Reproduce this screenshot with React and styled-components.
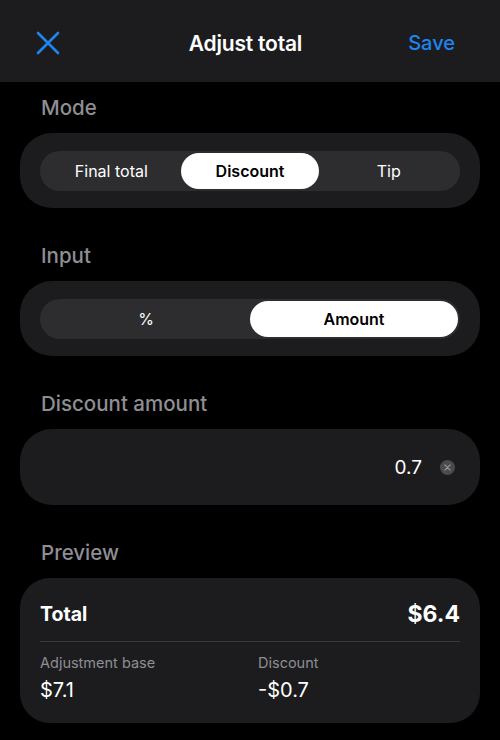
import React, { useState } from "react";
import styled, { createGlobalStyle } from "styled-components";

const GlobalStyle = createGlobalStyle`
  html, body {
    margin: 0;
    padding: 0;
    background: #000;
  }
  body {
    font-family: "Inter", "Liberation Sans", sans-serif;
    color: #fff;
    -webkit-font-smoothing: antialiased;
  }
`;

const Page = styled.div`
  width: 500px;
  min-height: 740px;
  background: #000;
`;

const Header = styled.div`
  height: 82px;
  background: #1c1c1e;
  display: grid;
  grid-template-columns: 1fr auto 1fr;
  align-items: center;
  padding: 4px 45px 0 36px;
  box-sizing: border-box;
`;

const IconButton = styled.button`
  background: none;
  border: 0;
  padding: 0;
  width: 24px;
  height: 24px;
  display: flex;
  align-items: center;
  justify-content: center;
  cursor: pointer;
  justify-self: start;
`;

const Title = styled.div`
  font-size: 21px;
  font-weight: 600;
  letter-spacing: -0.2px;
`;

const SaveButton = styled.button`
  justify-self: end;
  background: none;
  border: 0;
  padding: 0;
  color: #1e84ee;
  font-family: inherit;
  font-size: 20px;
  font-weight: 500;
  cursor: pointer;
`;

const Content = styled.div`
  padding: 14px 20px 18px;
`;

const Label = styled.div`
  font-size: 20.5px;
  font-weight: 500;
  line-height: 24px;
  color: #8e8e93;
  padding-left: 21px;
  margin-top: ${(p) => (p.first ? 0 : 36)}px;
  margin-bottom: 13px;
`;

const Card = styled.div`
  background: #1c1c1e;
  border-radius: 32px;
  height: ${(p) => p.h || 75}px;
  padding: 0 20px;
  box-sizing: border-box;
  display: flex;
  align-items: center;
`;

const Segmented = styled.div`
  flex: 1;
  display: flex;
  background: #2d2d30;
  border-radius: 20px;
  padding: 2px;
  height: 40px;
  box-sizing: border-box;
`;

const Segment = styled.button`
  flex: 1;
  border: 0;
  border-radius: 18px;
  background: ${(p) => (p.active ? "#fff" : "transparent")};
  color: ${(p) => (p.active ? "#000" : "#fff")};
  font-family: inherit;
  font-size: 16px;
  font-weight: ${(p) => (p.active ? 600 : 400)};
  cursor: pointer;
`;

const AmountInput = styled.input`
  flex: 1;
  background: none;
  border: 0;
  outline: none;
  color: #fff;
  text-align: right;
  font-family: inherit;
  font-size: 19px;
  padding: 0;
  margin-right: 18px;
`;

const ClearButton = styled.button`
  width: 15px;
  height: 15px;
  border-radius: 50%;
  border: 0;
  padding: 0;
  background: #4b4b4e;
  display: flex;
  align-items: center;
  justify-content: center;
  margin-right: 5px;
  cursor: pointer;
`;

const PreviewCard = styled.div`
  background: #1c1c1e;
  border-radius: 30px;
  padding: 20px 20px 21px;
`;

const TotalRow = styled.div`
  display: flex;
  justify-content: space-between;
  align-items: center;
  height: 32px;
`;

const TotalLabel = styled.div`
  font-size: 19.5px;
  font-weight: 700;
`;

const TotalValue = styled.div`
  font-size: 23px;
  font-weight: 700;
`;

const Divider = styled.div`
  height: 1px;
  background: #38383a;
  margin-top: 11px;
`;

const Details = styled.div`
  display: grid;
  grid-template-columns: 1fr 1fr;
  column-gap: 16px;
  margin-top: 12px;
`;

const DetailLabel = styled.div`
  font-size: 14.5px;
  line-height: 18px;
  color: #8e8e93;
`;

const DetailValue = styled.div`
  font-size: 20px;
  line-height: 24px;
  margin-top: 6px;
`;

const modes = ["Final total", "Discount", "Tip"];
const inputs = ["%", "Amount"];

export default function App() {
  const [mode, setMode] = useState("Discount");
  const [inputType, setInputType] = useState("Amount");
  const [amount, setAmount] = useState("0.7");

  const base = 7.1;
  const value = parseFloat(amount) || 0;
  const total = Math.round((base - value) * 100) / 100;

  return (
    <Page>
      <GlobalStyle />
      <Header>
        <IconButton aria-label="Close">
          <svg width="24" height="24" viewBox="0 0 24 24">
            <path
              d="M2 2 L22 22 M22 2 L2 22"
              stroke="#1e84ee"
              strokeWidth="2.6"
              strokeLinecap="round"
            />
          </svg>
        </IconButton>
        <Title>Adjust total</Title>
        <SaveButton>Save</SaveButton>
      </Header>
      <Content>
        <Label first>Mode</Label>
        <Card>
          <Segmented>
            {modes.map((m) => (
              <Segment key={m} active={m === mode} onClick={() => setMode(m)}>
                {m}
              </Segment>
            ))}
          </Segmented>
        </Card>

        <Label>Input</Label>
        <Card>
          <Segmented>
            {inputs.map((m) => (
              <Segment
                key={m}
                active={m === inputType}
                onClick={() => setInputType(m)}
              >
                {m}
              </Segment>
            ))}
          </Segmented>
        </Card>

        <Label>Discount amount</Label>
        <Card h={76}>
          <AmountInput
            value={amount}
            onChange={(e) => setAmount(e.target.value)}
          />
          <ClearButton aria-label="Clear" onClick={() => setAmount("")}>
            <svg width="7" height="7" viewBox="0 0 8 8">
              <path
                d="M1 1 L7 7 M7 1 L1 7"
                stroke="#9a9a9f"
                strokeWidth="1.3"
                strokeLinecap="round"
              />
            </svg>
          </ClearButton>
        </Card>

        <Label>Preview</Label>
        <PreviewCard>
          <TotalRow>
            <TotalLabel>Total</TotalLabel>
            <TotalValue>${total}</TotalValue>
          </TotalRow>
          <Divider />
          <Details>
            <div>
              <DetailLabel>Adjustment base</DetailLabel>
              <DetailValue>${base}</DetailValue>
            </div>
            <div>
              <DetailLabel>Discount</DetailLabel>
              <DetailValue>-${value}</DetailValue>
            </div>
          </Details>
        </PreviewCard>
      </Content>
    </Page>
  );
}
